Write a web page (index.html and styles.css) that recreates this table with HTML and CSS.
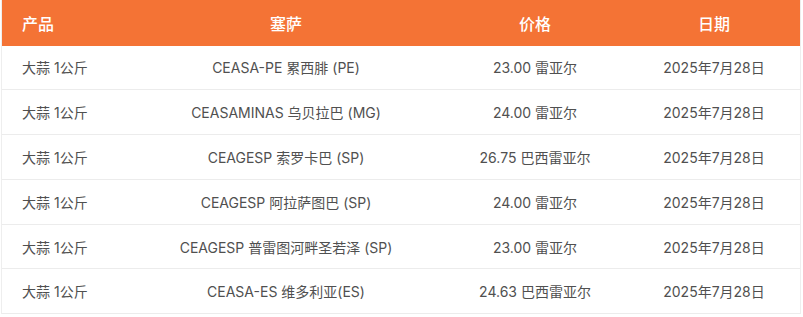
FILE: index.html
```html
<!DOCTYPE html>
<html lang="zh">
<head>
<meta charset="utf-8">
<link rel="stylesheet" href="styles.css">
</head>
<body>
<div class="wrap">
<table class="prices">
<colgroup><col class="c1"><col class="c2"><col class="c3"><col class="c4"></colgroup>
<thead>
<tr><th class="left">产品</th><th>塞萨</th><th>价格</th><th>日期</th></tr>
</thead>
<tbody>
<tr><td class="left">大蒜 1公斤</td><td>CEASA-PE 累西腓 (PE)</td><td>23.00 雷亚尔</td><td>2025年7月28日</td></tr>
<tr><td class="left">大蒜 1公斤</td><td>CEASAMINAS 乌贝拉巴 (MG)</td><td>24.00 雷亚尔</td><td>2025年7月28日</td></tr>
<tr><td class="left">大蒜 1公斤</td><td>CEAGESP 索罗卡巴 (SP)</td><td>26.75 巴西雷亚尔</td><td>2025年7月28日</td></tr>
<tr><td class="left">大蒜 1公斤</td><td>CEAGESP 阿拉萨图巴 (SP)</td><td>24.00 雷亚尔</td><td>2025年7月28日</td></tr>
<tr><td class="left">大蒜 1公斤</td><td>CEAGESP 普雷图河畔圣若泽 (SP)</td><td>23.00 雷亚尔</td><td>2025年7月28日</td></tr>
<tr><td class="left">大蒜 1公斤</td><td>CEASA-ES 维多利亚(ES)</td><td>24.63 巴西雷亚尔</td><td>2025年7月28日</td></tr>
</tbody>
</table>
</div>
</body>
</html>
```
FILE: styles.css
```css
html, body { margin: 0; padding: 0; background: #fff; }
body { font-family: Inter, "Noto Sans CJK SC", sans-serif; }
.wrap {
  margin-left: 1px;
  width: 800px;
  border-left: 1px solid #eee;
  border-right: 1px solid #eee;
  box-sizing: border-box;
}
.prices {
  width: 798px;
  border-collapse: collapse;
  table-layout: fixed;
}
.c1 { width: 128px; }
.c2 { width: 312px; }
.c3 { width: 186px; }
.c4 { width: 172px; }
.prices th {
  background: #f47335;
  color: #fff;
  font-size: 16px;
  font-weight: 500;
  height: 45.5px;
  padding: 0;
  text-align: center;
}
.prices td {
  height: 43.8px;
  padding: 0;
  border-bottom: 1px solid #ececec;
  font-size: 14px;
  color: #505050;
  text-align: center;
  white-space: nowrap;
}
.prices .left { text-align: left; padding-left: 20px; }
```
